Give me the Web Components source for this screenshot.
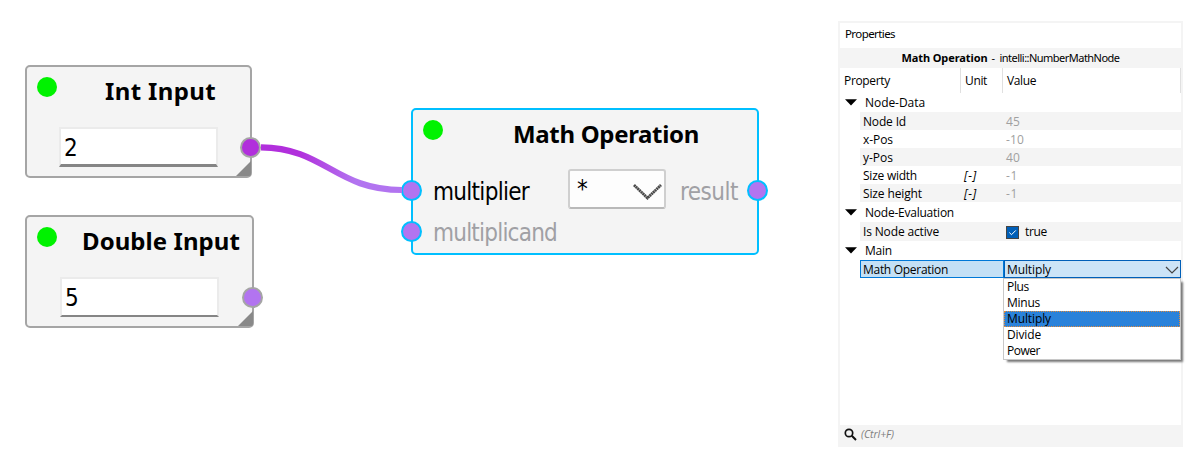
<!DOCTYPE html>
<html lang="en">
<head>
<meta charset="utf-8">
<title>Node graph</title>
<style>html,body{margin:0;background:#fff}body{width:1194px;height:462px;overflow:hidden}</style>
</head>
<body>
<graph-app></graph-app>
<script>
const define = (name, html, setup) => customElements.define(name, class extends HTMLElement {
  connectedCallback() {
    if (this.shadowRoot) return;
    const t = document.createElement('template');
    t.innerHTML = html;
    this.attachShadow({mode: 'open'}).append(t.content.cloneNode(true));
    if (setup) setup(this, this.shadowRoot);
  }
});

/* Text run whose tracking is adjusted to occupy the width given in "w". */
define('fit-text', `<style>:host{display:inline-block;white-space:pre}span{display:inline-block}</style><span><slot></slot></span>`,
  (el, root) => {
    const w = +el.getAttribute('w');
    if (!w) return;
    const s = root.querySelector('span');
    s.style.letterSpacing = (w - s.getBoundingClientRect().width) / el.textContent.length + 'px';
  });

define('node-port', `<style>
:host{position:absolute;display:block;box-sizing:border-box;width:21px;height:21px;border-radius:50%;border:2px solid var(--line);background:var(--fill,#b274f0)}
</style>`);

define('graph-node', `<style>
:host{position:absolute;display:block;box-sizing:border-box;border:2px solid var(--line);border-radius:5px;background:#f4f4f4;font-family:"DejaVu Sans Condensed","DejaVu Sans",sans-serif;font-stretch:condensed;color:#000}
.head{display:flex;justify-content:space-between;height:50px;padding:10px 0 0 10px;box-sizing:border-box}
.led{width:20px;height:20px;border-radius:50%;background:#00f200}
.title{font-family:"Noto Sans","Open Sans",sans-serif;font-stretch:normal;font-weight:700;font-size:24px;line-height:28px;padding-right:var(--tr)}
.grip{position:absolute;right:-2px;bottom:-1px;width:16px;height:16px;display:var(--grip,block)}
</style>
<div class="head"><div class="led"></div><div class="title"><slot name="title"></slot></div></div>
<slot></slot>
<svg class="grip" viewBox="0 0 16 16"><path d="M15 0V13Q15 15 13 15H0Z" fill="#898989"/></svg>
<slot name="port"></slot>`);

define('number-field', `<style>
:host{display:block;box-sizing:border-box;height:40px;background:#fff;border:2px solid #ebebeb;border-bottom:var(--ub,3px) solid #858585;font-size:24px;line-height:38px;padding-left:3px}
</style><slot></slot>`);

define('op-select', `<style>
:host{display:flex;box-sizing:border-box;width:98px;height:40px;border:2px solid #cfcfcf;border-bottom-color:#b9b9b9;border-radius:3px;background:#fdfdfd;justify-content:space-between;align-items:center;padding:0 2px 0 7px;font-size:24px;line-height:36px}
svg{width:30px;height:18px;margin-top:6px}
</style><slot></slot><svg viewBox="0 0 30 18"><path d="M2 2L15.500 15L29 2" fill="none" stroke="#484848" stroke-width="2.800" stroke-dasharray="2 .4"/></svg>`);

define('prop-group', `<style>
:host{display:flex;align-items:center;height:var(--h,19px);padding-left:5px;gap:8px}
svg{width:12px;height:7px}
</style><svg viewBox="0 0 12 7"><path d="M0 .3H12L6 6.500Z"/></svg><slot></slot>`);

define('prop-row', `<style>
:host{display:grid;grid-template-columns:101px 42px 1fr;box-sizing:border-box;height:18px;line-height:20px;margin-left:20px;padding-left:3px;background:var(--bg,#fff)}
.v{color:#a0a0a0;display:flex;align-items:center}
.u{font-style:italic}
</style><div><slot></slot></div><div class="u"><slot name="unit"></slot></div><div class="v"><slot name="value"></slot></div>`);

define('check-box', `<style>:host{display:flex;align-items:center;gap:6px;color:#000}svg{width:13px;height:13px}</style>
<svg viewBox="0 0 13 13"><rect x=".5" y=".5" width="12" height="12" fill="#005fb8" stroke="#444"/><path d="M3.300 6.500L5.500 8.700L9.800 4.400" fill="none" stroke="#fff" stroke-width="1"/></svg><slot></slot>`);

define('enum-row', `<style>
:host{display:flex;margin-left:20px;height:18px;position:relative;line-height:18px}
.n,.c{box-sizing:border-box;height:18px;border:1px solid #0078d7;padding-left:2px;line-height:18px}
.n{width:144px;background:#c4e0f5}
.c{width:177px;border-color:#005fb8;background:#cce4f7;display:flex;justify-content:space-between;align-items:center;padding:1px 1px 0 2px}
svg{width:14px;height:8px}
.list{position:absolute;left:143px;top:18px;width:178px;height:82px;box-sizing:border-box;border:1px solid #c8c8c8;background:#fff;box-shadow:3px 3px 2px -1px #777}
</style>
<div class="n"><slot></slot></div><div class="c"><slot name="value"></slot><svg viewBox="0 0 14 8"><path d="M1 1L7 7L13 1" fill="none" stroke="#444" stroke-width="1.200"/></svg></div>
<div class="list"><slot name="item"></slot></div>`);

define('enum-item', `<style>
:host{display:block;box-sizing:border-box;height:16px;line-height:16px;padding-left:3px}
:host([selected]){background:#2a82da;outline:1px dotted #e08a3c;outline-offset:-1px}
</style><slot></slot>`);

define('props-panel', `<style>
:host{position:absolute;left:838px;top:21px;width:345px;height:426px;box-sizing:border-box;border:2px solid #f4f4f4;border-bottom:0;display:flex;flex-direction:column;background:#fff;font:12px/19px "Open Sans","Noto Sans",sans-serif;color:#000}
.title{height:25px;line-height:22px;padding-left:5px;box-sizing:border-box;font-family:"Noto Sans",sans-serif;font-size:11.500px}
.sub{height:20px;line-height:20px;background:#f4f4f4;text-align:center;font-family:"Noto Sans",sans-serif;font-size:11px;white-space:pre}
.cols{display:grid;grid-template-columns:121px 42px 178px;height:24px;line-height:25px}
.cols div{border-right:1px solid #e0e0e0;box-sizing:border-box;padding-left:4px}
.body{flex:1}
.foot{height:22px;background:#f4f4f4;display:flex;align-items:center;gap:4px;padding:0 0 3px 4px;box-sizing:border-box;color:#808080;font-style:italic;font-size:10.500px}
svg{width:13px;height:13px}
</style>
<div class="title"><fit-text w="50">Properties</fit-text></div>
<div class="sub"><fit-text w="86" style="font-weight:700">Math Operation</fit-text><fit-text w="12" style="word-spacing:1px"> - </fit-text><fit-text w="120">intelli::NumberMathNode</fit-text></div>
<div class="cols"><div><fit-text w="46">Property</fit-text></div><div><fit-text w="22">Unit</fit-text></div><div><fit-text w="29">Value</fit-text></div></div>
<div class="body"><slot></slot></div>
<div class="foot"><svg viewBox="0 0 13 13"><circle cx="5" cy="5" r="3.700" fill="none" stroke="#111" stroke-width="1.700"/><path d="M7.800 7.800L12 12" stroke="#111" stroke-width="2"/></svg><fit-text w="33">(Ctrl+F)</fit-text></div>`);

define('graph-app', `<style>
:host{display:block;position:relative;width:1194px;height:462px;background:#fff;--line:#a5a5a5}
.wire{position:absolute;left:0;top:0}
.a{left:25px;top:65px;width:227px;height:113px;--tr:34px}
.b{left:25px;top:215px;width:229px;height:113px;--tr:12px}
.m{left:411px;top:108px;width:348px;height:147px;--line:#00bfff;--tr:58px;--grip:none}
.f{margin:10px 32px 0 32px}
.m .row{display:flex;height:41px;align-items:center;font-size:24px;line-height:40px;padding:0 19px 0 20px}
.m .row fit-text{margin-top:5px}
.dim{color:#a0a0a4}
.combo{margin-left:39px;margin-right:14px}
</style>
<graph-node class="a"><fit-text slot="title" w="111">Int Input</fit-text><number-field class="f">2</number-field>
<node-port slot="port" style="left:213px;top:69.500px;--fill:#b12fdc"></node-port></graph-node>
<graph-node class="b"><fit-text slot="title" w="158">Double Input</fit-text><number-field class="f" style="margin-left:33px;margin-right:33px;--ub:2px">5</number-field>
<node-port slot="port" style="left:215px;top:69.500px"></node-port></graph-node>
<graph-node class="m"><fit-text slot="title" w="186">Math Operation</fit-text>
<div class="row" style="margin-top:8.500px"><fit-text w="96">multiplier</fit-text><op-select class="combo">*</op-select><fit-text class="dim" w="58">result</fit-text></div>
<div class="row dim"><fit-text w="124">multiplicand</fit-text></div>
<node-port slot="port" style="left:-12px;top:69.500px"></node-port><node-port slot="port" style="left:-12px;top:110.500px"></node-port><node-port slot="port" style="left:334px;top:69.500px"></node-port></graph-node>
<svg class="wire" width="1194" height="462"><defs><linearGradient id="g" gradientUnits="userSpaceOnUse" x1="251" y1="0" x2="411" y2="0"><stop offset=".3" stop-color="#b12fdc"/><stop offset=".65" stop-color="#b274f0"/></linearGradient></defs>
<path d="M261 147.300C325 148 335 190 402 190" fill="none" stroke="url(#g)" stroke-width="6.200"/></svg>
<props-panel>
<prop-group style="--h:20px"><fit-text w="60">Node-Data</fit-text></prop-group>
<prop-row style="--bg:#f4f4f4"><fit-text w="43">Node Id</fit-text><span slot="value"><fit-text w="14">45</fit-text></span></prop-row>
<prop-row><fit-text w="30">x-Pos</fit-text><span slot="value"><fit-text w="18">-10</fit-text></span></prop-row>
<prop-row style="--bg:#f4f4f4"><fit-text w="30">y-Pos</fit-text><span slot="value"><fit-text w="14">40</fit-text></span></prop-row>
<prop-row><fit-text w="54">Size width</fit-text><fit-text slot="unit" w="13">[-]</fit-text><span slot="value"><fit-text w="12">-1</fit-text></span></prop-row>
<prop-row style="--bg:#f4f4f4"><fit-text w="59">Size height</fit-text><fit-text slot="unit" w="13">[-]</fit-text><span slot="value"><fit-text w="12">-1</fit-text></span></prop-row>
<prop-group style="--h:20px"><fit-text w="89">Node-Evaluation</fit-text></prop-group>
<prop-row style="--bg:#f4f4f4;height:19px"><fit-text w="76">Is Node active</fit-text><check-box slot="value"><fit-text w="22">true</fit-text></check-box></prop-row>
<prop-group><fit-text w="27">Main</fit-text></prop-group>
<enum-row><fit-text w="85">Math Operation</fit-text><fit-text slot="value" w="44">Multiply</fit-text>
<enum-item slot="item"><fit-text w="22">Plus</fit-text></enum-item>
<enum-item slot="item"><fit-text w="33">Minus</fit-text></enum-item>
<enum-item slot="item" selected><fit-text w="44">Multiply</fit-text></enum-item>
<enum-item slot="item"><fit-text w="34">Divide</fit-text></enum-item>
<enum-item slot="item"><fit-text w="33">Power</fit-text></enum-item>
</enum-row>
</props-panel>`);
</script>
</body>
</html>
